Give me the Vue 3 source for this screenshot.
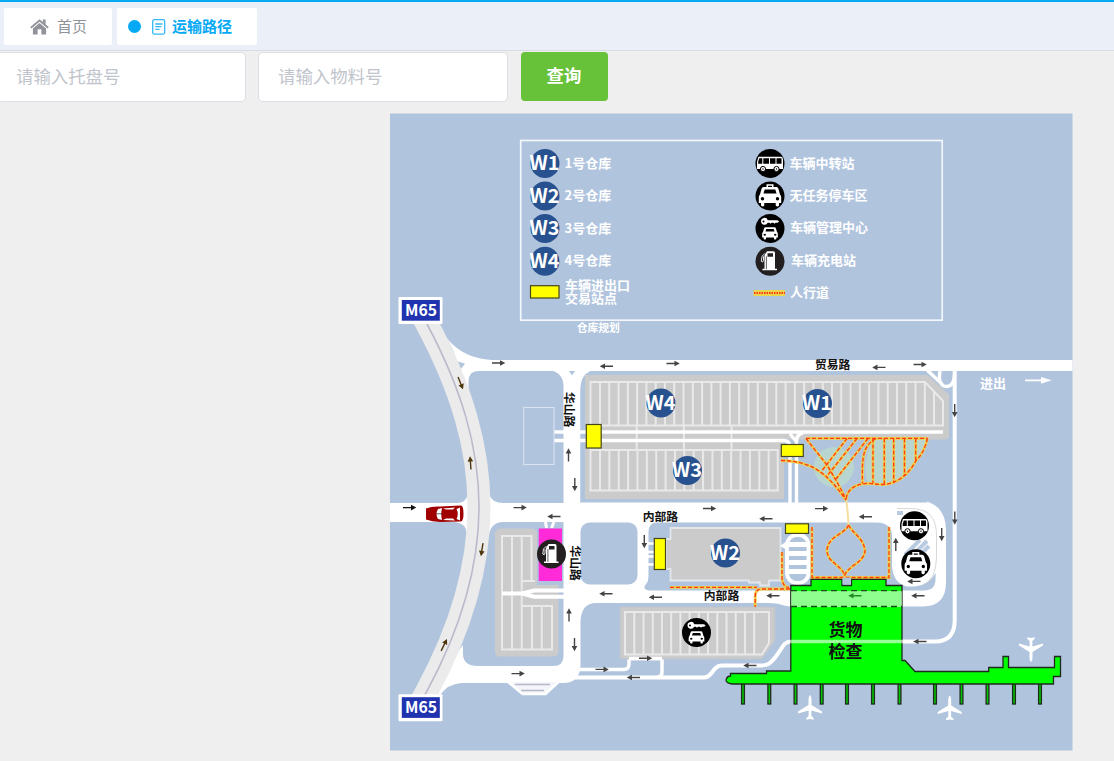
<script setup>
import { ref } from 'vue'

const palletNo = ref('') // 托盘号
const materialNo = ref('') // 物料号

// 图例：仓库
const legendStores = [
    { code: 'W1', name: '1号仓库', y: 163.5 },
    { code: 'W2', name: '2号仓库', y: 196 },
    { code: 'W3', name: '3号仓库', y: 228.5 },
    { code: 'W4', name: '4号仓库', y: 261.3 },
]

// 图例：设施
const legendSites = [
    { icon: 'bus', name: '车辆中转站', x: 789.5, y: 163.5, ty: 167.5 },
    { icon: 'taxi', name: '无任务停车区', x: 789.5, y: 196, ty: 199.5 },
    { icon: 'manage', name: '车辆管理中心', x: 790, y: 228.5, ty: 231.5 },
    { icon: 'pump', name: '车辆充电站', x: 791, y: 261.3, ty: 265 },
]

// 地图上的仓库
const stores = [
    { code: 'W4', x: 661, y: 403 },
    { code: 'W1', x: 817.5, y: 403.5 },
    { code: 'W3', x: 687.5, y: 470.5 },
    { code: 'W2', x: 725.5, y: 553 },
]

// 进出口交易站点
const gates = [
    [530.5, 285.7, 28.5, 12.3],
    [586.3, 424.5, 14.9, 23.5],
    [781.3, 444.5, 22, 12],
    [785.5, 523.8, 23, 9.6],
    [654.3, 538.5, 11.2, 31],
]

// 方向箭头 [x, y, 角度, 颜色]
const arrows = [
    [498.5, 363, 0], [606.5, 366.2, 180], [673, 363.5, 0], [879, 367.4, 180], [920, 364.5, 0],
    [568.5, 455, -90], [574.8, 484.5, 90],
    [409.5, 507.6, 0, '#111'], [520, 507.6, 0], [554, 516.5, 180], [709.5, 508.5, 0],
    [766, 518.8, 180], [821.5, 508.6, 0], [865.5, 516.8, 180],
    [644.3, 541.5, 90], [606, 593.8, 180], [655.5, 597.2, 180], [773, 595.8, 180],
    [918, 595.8, 180], [895.8, 544.5, -90], [941.7, 534.5, 90], [954.8, 518, 90],
    [954.7, 410.5, 90], [569, 615, -90], [574.5, 644.5, 90], [602, 669.4, 0],
    [645.5, 658.2, 0], [633.5, 677.5, 180], [750, 665.5, 180], [920, 641.5, 180],
    [518, 673.6, 0], [914, 581.4, 180],
    [460.5, 383, 68, '#4d360c'], [470.5, 463, -94, '#4d360c'],
    [482, 549.5, 99, '#4d360c'], [444, 645, -64, '#4d360c'],
]

// 人行道
const walks = [
    'M754 293H785',
    'M806 438.3H927.5',
    'M927.5 438.3C925 449 921 456 916 460.500C909 474 897 484.500 882 484.500C875 484.500 870 482.500 862 484C852 486 846 492 846.300 500',
    'M873 438.5V483', 'M884.300 438.5V484', 'M893.700 438.5V483', 'M904.500 438.5V476', 'M915.700 438.5V461',
    'M876 438.5C862 446 862 459 862.500 483.500',
    'M806 438.500L827 465C834 477 841 488 846 500',
    'M847 438.500L822.500 470', 'M857 438.500L827 476', 'M868 438.500L836 479',
    'M781 460.500C812 461 827 473 846 500',
    'M848.500 525C846 534 827 536 827 551C828 564 843 565 844.500 576',
    'M848.500 525C853 534 864 538 865 551C864 563 847 566 844.500 576',
    'M812 527V577.500H889V527',
    'M782 552V579Q783 587 789 587.5',
    'M670 587.300H757', 'M790 589H762Q755.200 589 755.200 596V607',
]

const fingers = [743, 769.3, 795.5, 821.7, 847, 873, 899.5, 935, 961.5, 987.5, 1014, 1040]

const planes = [
    [810, 707.5, 0],
    [949.7, 708, 0],
    [1031, 649.5, 180],
]

// 等距车位线
function stalls(start, step, count, top, bottom) {
    let d = ''
    for (let i = 0; i < count; i++) {
        d += `M${start + i * step} ${top}V${bottom}`
    }
    return d
}
</script>

<template>
    <div class="page">
        <!-- 标签栏 -->
        <div class="tabs">
            <div class="tab">
                <svg class="home" viewBox="0 0 20 17">
                    <path d="M10 4.200L17 10V16.500H12V11H8V16.500H3V10Z" />
                    <path d="M.8 9.300L10 1.600L19.200 9.300" fill="none" stroke="#909399" stroke-width="1.900" />
                    <path d="M13.500 .5H16.500V6L13.500 3.500Z" />
                </svg>
                <span>首页</span>
            </div>
            <div class="tab active">
                <i class="dot"></i>
                <svg class="doc" viewBox="0 0 14 16">
                    <rect x=".7" y=".7" width="12" height="14.400" rx="1.500" />
                    <path d="M3.300 5H10.500M3.300 7.700H9.500M3.300 10.400H7.500" />
                </svg>
                <span>运输路径</span>
            </div>
        </div>

        <!-- 查询条件 -->
        <div class="search">
            <input v-model="palletNo" placeholder="请输入托盘号">
            <input v-model="materialNo" placeholder="请输入物料号">
            <button>查询</button>
        </div>

        <!-- 园区地图 -->
        <svg class="map" viewBox="390 113 683 638">
            <defs>
                <g id="disc-bus">
                    <circle r="14.500" fill="#000" />
                    <path d="M-11.500-6.700H11Q13-6.700 13-4V5.500H-13V-2Z" fill="#fff" />
                    <path d="M-10.700-5.200H-7.700V.3H-11.800V-2ZM-6.700-5.200H-1V.3H-6.700ZM0-5.200H5.500V.3H0ZM6.500-5.200H11.500V.3H6.500Z" fill="#000" />
                    <circle v-for="x in [-7, 6.500]" :key="x" :cx="x" cy="5.500" r="2.600" fill="#fff" stroke="#000" stroke-width="1" />
                    <circle v-for="x in [-7, 6.500]" :key="'c' + x" :cx="x" cy="5.500" r=".7" fill="#000" />
                </g>
                <g id="car">
                    <path fill-rule="evenodd" d="M-6.500-9H6.500Q8-9 8.500-7L10-1.500Q11.200-.5 11.200 1.500V7H9V9.500Q7.300 11.500 5.700 9.500V7H-5.700V9.500Q-7.300 11.500-9 9.500V7H-11.200V1.500Q-11.200-.5-10-1.500L-8.500-7Q-8-9-6.500-9ZM-5.300-6.500L-6.500-2.500H6.500L5.300-6.500ZM-7.500 1A1.700 1.700 0 1 0-7.500 4.400A1.700 1.700 0 1 0-7.500 1ZM7.500 1A1.700 1.700 0 1 0 7.500 4.400A1.700 1.700 0 1 0 7.500 1Z" fill="#fff" />
                </g>
                <g id="disc-taxi">
                    <circle r="14.500" fill="#000" />
                    <use href="#car" />
                    <path d="M-3.500-11.800H3.500V-8.500H2V-10.300H-2V-8.500H-3.500Z" fill="#fff" />
                </g>
                <g id="disc-manage">
                    <circle r="14.500" fill="#000" />
                    <use href="#car" transform="translate(0 4.500) scale(.7 .63)" />
                    <path fill-rule="evenodd" d="M-9-7.200A3.500 3.500 0 0 1-2.200-8.300H7.500L9.200-7L7.500-5.800H5.500L4.500-4.800L3.500-5.800H1.500L.5-4.800L-.5-5.800H-2.300A3.500 3.500 0 0 1-9-7.200ZM-7.500-7.100A1 1 0 1 0-5.500-7.100A1 1 0 1 0-7.500-7.100Z" fill="#fff" />
                </g>
                <g id="disc-pump">
                    <circle r="14.500" fill="#231f20" />
                    <path fill-rule="evenodd" d="M-3-10H3.500Q5-10 5-8.500V7.500H7V9H-7.500V7.500H-5.500V-6ZM-2.500-8V-4.500H3V-8Z" fill="#fff" />
                    <path d="M-5-8L-8-5L-8.700 0Q-7 2-6.500-1L-6.500-5" fill="none" stroke="#fff" stroke-width=".9" />
                    <path d="M-3.600-5V8" stroke="#231f20" stroke-width=".7" />
                </g>
                <path id="arrow" d="M-6.500-.7H1.500V-2.800L6.800 0L1.500 2.800V.7H-6.500Z" />
                <path id="plane" d="M0-12.500Q1.500-11.500 1.500-7V-2.500L12 4V6L1.400 3V8.500L3.700 10.700V12.300L0 11.500L-3.700 12.300V10.700L-1.400 8.500V3L-12 6V4L-1.500-2.500V-7Q-1.500-11.500 0-12.500Z" />
            </defs>

            <rect x="390" y="113.5" width="682.5" height="637" fill="#b0c4de" />

            <!-- 主干道 -->
            <g fill="#fff">
                <path d="M447 338C456 350 472 360 496 360H1072.500V371H478Q469 371 468.500 381V394L453 350Z" />
                <path d="M551 370.500Q563.500 373 563.500 387V504H580.500V388Q581 374 592 370.500Z" />
                <path d="M390 503H457Q466 503 468 494H489Q492 503 503 503H565V522H503Q492 522 489 534H467Q466 523 455 522H390Z" />
                <path d="M563.500 503H840C860 499 885 499.500 912 499.500Q946 500 946 530V582Q946 606.500 923 606.500H797C782 607 782 603 768 603H596Q581 603 580.500 622V665Q580 683 563 683H461Q448 684 440 695L431 688L463 645V654Q463 666 478 666H553Q563.500 666 563.500 656Z" />
            </g>
            <g fill="#b0c4de">
                <path d="M457.500 361.500L465 363.500L461 369Z" />
                <path d="M569 371H575L572 375.500Z" />
                <rect x="580.5" y="522.5" width="57" height="62" rx="9" />
                <path d="M657 522.500H877Q892 523 892 536V566Q893 583 907 586.500H915Q929 585 935.500 573V580Q935 590.500 924 590.500H652Q641 590.500 646 584Q648.500 582 648.500 575V532Q648.500 522.500 657 522.500Z" />
            </g>
            <path d="M897 508.500H912Q936.500 509 936.500 535V558Q936 580 922 586" class="edge" />
            <path d="M905 555L920 540M911 557L927 541M918 557L929 546M897 513L903 513" stroke="#b9cbe1" stroke-width="4" />

            <!-- 辅路 -->
            <g class="lane">
                <path d="M954.700 371V620Q954.700 641.500 935 641.500H791C782 641.500 782 651 772 661Q768 665.500 762 665.500H722C712 665.500 713 677.500 704 677.500H575" />
                <path d="M578 669.500H624Q629 669.500 629 664V658.500H662V672Q662 677 657 677" stroke-width="3.500" />
                <path d="M790 438V503M796.500 438V503" stroke-width="3" />
                <path d="M545.500 522L546.500 528M551.500 528L554 522" stroke-width="3" />
            </g>
            <path d="M508 682L522.500 694H545.500L558.500 682" fill="#f4f5fa" stroke="#fff" stroke-width="2.500" />
            <path d="M515 684.500H550M521 690.500H544" stroke="#b9b8ca" stroke-width="1.500" />

            <!-- 高速公路 -->
            <g fill="none">
                <path d="M420 311L427 324C461 388 479 446 479 507C479 568 461 628 427 691L420 704" stroke="#ebebeb" stroke-width="23" />
                <path d="M420 311L427 324C461 388 479 446 479 507C479 568 461 628 427 691L420 704" stroke="#bcb9cb" stroke-width="1.600" />
            </g>

            <!-- 1、3、4号仓库 -->
            <path d="M580.5 390Q582 373 594 371H927V503H580.5Z" fill="#b0c4de" />
            <path d="M580.500 502.500H928V504H580.500Z" fill="#fff" />
            <path d="M585 375H927.500L949 394.500V437Q948 439.500 945 439.500H784V499H585Z" fill="#cbcbcb" />
            <path d="M927 370L942.500 384.500M940 371Q937.500 386.500 947 386.500Q954 386 954.500 375" class="lane" stroke-width="3.500" />
            <g class="stall">
                <path d="M590.500 382H925L943 401V425.500H590.500Z" />
                <path d="M590.500 450H777.700V490.500H590.500Z" />
                <path :d="stalls(600, 9.28, 36, 382, 425)" />
                <path d="M934 392V425" />
                <path :d="stalls(600, 9.37, 19, 450, 490)" />
                <path d="M636.700 425V450M683.900 425V450M731.500 425V450" />
            </g>
            <path d="M554 432H943M554 440.500H784Q790 441 790 447V503M796.500 503V442Q796.500 434 803 433M790 434L796 441" class="lane" stroke-width="3.300" />

            <!-- 绿地与广场 -->
            <g fill="#b8d6cf">
                <circle cx="834" cy="467" r="20" />
                <path d="M873 440Q861 462 868 484L882 484Q899 483 916 461Q925 450 927 439Z" />
            </g>

            <!-- 充电站旁停车场 -->
            <path d="M500 528.500H532Q537 529 537 534V585H558.500V652Q558 656.500 553 656.500H500Q495 656.500 495 651V534Q495.500 529 500 528.500Z" fill="#cbcbcb" />
            <g class="stall">
                <path d="M531.500 581V536H502V649.500H552V606H522" />
                <path d="M512 536V649M521.700 536V649M532 606V649M541.700 606V649M522 581H535" />
            </g>
            <path d="M502 593.500H522L534 590.500H564M522 593.500L534 596.800H564" class="lane" stroke-width="3" />
            <rect x="538.7" y="528.5" width="23.300" height="52.500" fill="#ff2bd8" />
            <rect x="523.7" y="407.5" width="30.300" height="57" fill="none" stroke="#dbe5f1" />

            <!-- 2号仓库 -->
            <path d="M670.5 528H780.500V580.500H769V585.500H760V582.500H749V580.500H670.500V569H666V539H670.500Z" fill="#cbcbcb" stroke="#e3e7ec" stroke-width="1.800" />
            <path d="M648 543.500H654M648 552H654M648 556.500H654M648 564.500H654" stroke="#fff" stroke-width="2.600" />

            <!-- 管理中心停车场 -->
            <path d="M620 607H775V640L762 659H620Z" fill="#cbcbcb" stroke="#bdc5cf" />
            <g class="stall">
                <path d="M625 612H769V643L762 654.500H625Z" />
                <path :d="stalls(634.3, 9.22, 14, 612, 654)" />
            </g>
            <path d="M629 658.500H662" class="lane" stroke-width="3.500" />

            <!-- 环形坡道 -->
            <rect x="787" y="535" width="21.500" height="48" rx="10" fill="#b0c4de" stroke="#fff" stroke-width="3.800" />
            <path d="M788 544.500H808M788 553.500H808M788 562.500H808M788 571.500H808" stroke="#fff" stroke-width="5" />
            <path d="M787 541L780 546L787 550" fill="#fff" />

            <!-- 人行道 -->
            <path d="M846 499Q848 511 848.500 526" fill="none" stroke="#f5dfa0" stroke-width="2" />
            <rect x="753.5" y="290" width="31.500" height="6" fill="#ead64d" />
            <g fill="none">
                <path v-for="(d, i) in walks" :key="'y' + i" :d="d" stroke="#f0cf48" stroke-width="2.800" />
                <path v-for="(d, i) in walks" :key="'r' + i" :d="d" stroke="#ff3b16" :stroke-width="i ? 1.3 : 2" :stroke-dasharray="i ? '4 2' : '1.5 1'" />
            </g>

            <!-- 货物检查航站楼 -->
            <g stroke="#1d2b1d" stroke-width="1.300">
                <rect v-for="x in fingers" :key="x" :x="x - 1.4" y="683" width="2.800" height="21" fill="#00c800" />
                <path fill="#0f0" d="M790.800 585.500H811V579.300H842V585.500H851.500V579.300H886V585.500H902V660.500H905L915 671.500H988.700V667.500H1003V656.500H1008.500V667.500H1054.500V656.500H1060.500V676.500H1053.500V684H732Q726 683 726 680Q727 676 730.500 676V673.500H766.500V671H790.800Z" />
            </g>
            <rect x="842.5" y="577.5" width="8.500" height="7" fill="#b0c4de" />
            <rect x="791" y="591" width="111" height="16" fill="#fff" opacity=".56" />
            <path d="M791 590.700H902M791 606.500H902" stroke="#174d17" stroke-width="1.300" stroke-dasharray="6 4" />
            <path d="M790 641.500H903" stroke="#fff" stroke-width="3.500" opacity=".6" />
            <use href="#arrow" transform="translate(855 595.8) rotate(180)" fill="#248c24" />
            <use v-for="p in planes" :key="p[0]" href="#plane" :transform="`translate(${p[0]} ${p[1]}) rotate(${p[2]})`" fill="#fff" />

            <!-- 站点、箭头 -->
            <rect v-for="g in gates" :key="g[0]" :x="g[0]" :y="g[1]" :width="g[2]" :height="g[3]" fill="#ff0" stroke="#45451c" stroke-width="1.200" />
            <use v-for="a in arrows" :key="a[0] + '-' + a[1]" href="#arrow" :transform="`translate(${a[0]} ${a[1]}) rotate(${a[2]})`" :fill="a[3] || '#444'" />
            <use href="#arrow" transform="translate(1038 380.3) scale(2 1.2)" fill="#fff" />

            <!-- 车辆 -->
            <g>
                <path d="M426 508.500Q432 506 440 506.500L461 505.500Q463.500 506 463.500 513.500Q463.500 521 461 521.500L440 522Q432 521.500 426 519.500Z" fill="#a00000" />
                <path d="M438 509L442 508Q440.500 514 442 520L438 519Q435 514 438 509ZM443 508.500L455 507.500L453 509.500H446ZM443 520L455 520.500L453 518.500H446ZM456.500 509L460 507.500V520.500L456.500 519Q459 514 456.500 509Z" fill="#fff" />
                <path d="M436 513.800H442" stroke="#222" stroke-width=".7" />
            </g>

            <!-- 高速路牌 -->
            <g v-for="y in [310.5, 707.7]" :key="y">
                <rect x="398.5" :y="y - 13.500" width="44" height="27" rx="1" fill="#fff" />
                <rect x="401.8" :y="y - 10.500" width="38" height="20.700" fill="#1f34ae" />
                <text x="405" :y="y + 5.600" font-size="16" textLength="32" lengthAdjust="spacingAndGlyphs" class="bold">M65</text>
            </g>

            <!-- 图例 -->
            <rect x="520.7" y="140.5" width="421.500" height="179.700" fill="none" stroke="#f3f7fc" stroke-width="1.700" />
            <g v-for="s in legendStores" :key="s.code" class="bold">
                <circle cx="545" :cy="s.y" r="14.500" fill="#28528f" />
                <text x="529.5" :y="s.y + 6.800" font-size="19.500" textLength="30" lengthAdjust="spacingAndGlyphs">{{ s.code }}</text>
                <text x="564.5" :y="s.y + 4" font-size="13">{{ s.name }}</text>
            </g>
            <g v-for="s in legendSites" :key="s.icon" class="bold">
                <use :href="'#disc-' + s.icon" x="770" :y="s.y" />
                <text :x="s.x" :y="s.ty" font-size="13">{{ s.name }}</text>
            </g>
            <g class="bold" font-size="13">
                <text x="565" y="289.5">车辆进出口</text>
                <text x="565" y="302.5">交易站点</text>
                <text x="790" y="296.5">人行道</text>
                <text x="576.7" y="331.5" font-size="10.800">仓库规划</text>
                <text x="980" y="388">进出</text>
            </g>

            <!-- 地图标注 -->
            <g v-for="s in stores" :key="s.code + s.x" class="bold">
                <circle :cx="s.x" :cy="s.y" r="14.500" fill="#28528f" />
                <text :x="s.x - 15.500" :y="s.y + 6.800" font-size="19.500" textLength="30" lengthAdjust="spacingAndGlyphs">{{ s.code }}</text>
            </g>
            <use href="#disc-pump" x="551.5" y="554" />
            <use href="#disc-manage" x="696.5" y="632.5" />
            <use href="#disc-bus" x="914.5" y="525.8" />
            <use href="#disc-taxi" x="915.8" y="563.8" />
            <g class="bold dark" font-size="11.800">
                <text x="815" y="369">贸易路</text>
                <text x="642.7" y="520.5">内部路</text>
                <text x="703.8" y="600.3">内部路</text>
                <text transform="translate(565.3 392) rotate(90)">华山路</text>
                <text transform="translate(571 545.5) rotate(90)">华山路</text>
                <text x="828.5" y="635.500" font-size="17">货物</text>
                <text x="828.5" y="657.700" font-size="17">检查</text>
            </g>
        </svg>
    </div>
</template>

<style>
body {
    background: #efefef;
}
</style>

<style scoped>
.page {
    height: 761px;
    box-sizing: border-box;
    border-top: 2px solid #03a9f4;
    overflow: hidden;
    display: flex;
    flex-direction: column;
    font-family: "Noto Sans CJK SC", sans-serif;
}

.tabs {
    display: flex;
    gap: 5px;
    height: 49px;
    flex: none;
    box-sizing: border-box;
    padding: 6px 4px;
    background: #ebeff7;
    border-bottom: 1px solid #d8dce5;
}

.tab {
    display: flex;
    align-items: center;
    width: 108px;
    height: 37px;
    box-sizing: border-box;
    padding-left: 26px;
    background: #fff;
    border-radius: 2px;
    color: #909399;
    font-size: 15px;
}

.tab span {
    padding-bottom: 2px;
}

.tab.active {
    width: 140px;
    padding-left: 11px;
    color: #03a9f4;
    font-weight: bold;
}

.home {
    width: 19px;
    height: 16px;
    margin-right: 8px;
    fill: #909399;
}

.dot {
    width: 13px;
    height: 13px;
    border-radius: 50%;
    background: #03a9f4;
}

.doc {
    width: 14px;
    height: 16px;
    margin: 0 6px 0 11px;
    fill: none;
    stroke: #35b8f6;
    stroke-width: 1.3;
}

.search {
    display: flex;
    flex: none;
    margin: 1px 0 0 -4px;
}

.search input {
    width: 250px;
    height: 50px;
    box-sizing: border-box;
    margin-right: 12px;
    padding: 0 19px 4px;
    border: 1px solid #dcdfe6;
    border-radius: 5px;
    outline: none;
    background: #fff;
    font-family: inherit;
    font-size: 17.4px;
}

.search input::placeholder {
    color: #c0c4cc;
    opacity: 1;
}

.search button {
    width: 87px;
    height: 49px;
    margin-left: 1px;
    padding: 0 1px 4px 0;
    border: none;
    border-radius: 4px;
    background: #67c23a;
    color: #fff;
    font-family: inherit;
    font-size: 17.4px;
    font-weight: bold;
}

.map {
    display: block;
    flex: none;
    width: 683px;
    height: 638px;
    margin: 11px 0 0 390px;
}

.lane {
    fill: none;
    stroke: #fff;
    stroke-width: 4;
}

.lane[stroke-width="3.300"],
.lane[stroke-width="3.500"] {
    stroke-width: 3.4;
}

.stall {
    fill: none;
    stroke: #e9e9e9;
    stroke-width: 2;
}

.edge {
    fill: none;
    stroke: #c9c9c9;
    stroke-width: 0.7;
}

.bold {
    font-weight: bold;
    fill: #fff;
}

.dark {
    fill: #111;
}
</style>
